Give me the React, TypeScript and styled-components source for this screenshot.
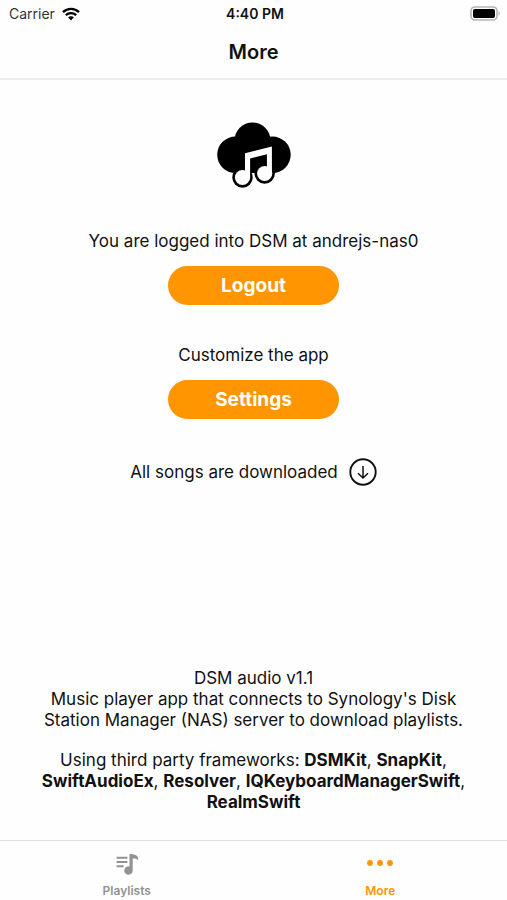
import React from "react";
import styled, { createGlobalStyle } from "styled-components";

const GlobalStyle = createGlobalStyle`
  *, *::before, *::after { box-sizing: border-box; }
  body {
    margin: 0;
    background: #fefefe;
    color: #111;
    font-family: Inter, "Liberation Sans", sans-serif;
    font-size: 17px;
    line-height: 21px;
  }
`;

const Screen = styled.div`
  display: flex;
  flex-direction: column;
  min-height: 100vh;
`;

const Header = styled.header`
  border-bottom: 2px solid #efefef;
`;

const StatusBar = styled.div`
  display: grid;
  grid-template-columns: 1fr auto 1fr;
  align-items: center;
  height: 27px;
  padding: 0 6px 0 9px;
  font-size: 14px;
  line-height: 20px;
`;

const Carrier = styled.span`
  display: flex;
  align-items: center;
  gap: 7px;
  color: #333;
`;

const Clock = styled.time`
  font-weight: 600;
`;

const Battery = styled.span`
  display: flex;
  justify-content: flex-end;
`;

const Title = styled.h1`
  margin: 0;
  padding: 13px 0;
  font-size: 20px;
  font-weight: 600;
  line-height: 25px;
  text-align: center;
`;

const Content = styled.main`
  flex: 1;
  display: flex;
  flex-direction: column;
  align-items: center;
  padding: 42px 32px 27px;
  text-align: center;
`;

const Sections = styled.div`
  display: flex;
  flex-direction: column;
  align-items: center;
  gap: 40px;
  margin: 41px 0 39px;
`;

const Section = styled.section`
  display: flex;
  flex-direction: column;
  align-items: center;
  gap: 14px;
`;

const Logo = styled.svg`
  display: block;
`;

const Text = styled.p`
  margin: 0;
`;

const PillButton = styled.button`
  width: 171px;
  height: 39px;
  border: 0;
  border-radius: 20px;
  background: #ff9500;
  color: #fff;
  font: inherit;
  font-size: 19px;
  font-weight: 700;
  cursor: pointer;
`;

const DownloadStatus = styled.div`
  display: flex;
  align-items: center;
  gap: 11px;
`;

const About = styled.footer`
  display: flex;
  flex-direction: column;
  gap: 19px;
  max-width: 440px;
  margin-top: auto;
`;

const TabBar = styled.nav`
  display: grid;
  grid-template-columns: 1fr 1fr;
  height: 60px;
  border-top: 1px solid #e0e0e0;
`;

const Tab = styled.a<{ $active?: boolean }>`
  display: flex;
  flex-direction: column;
  align-items: center;
  gap: 8px;
  padding-top: 10px;
  color: ${({ $active }) => ($active ? "#ff9500" : "#929292")};
  font-size: 12px;
  font-weight: 600;
  line-height: 16px;
  text-decoration: none;
`;

const WifiIcon = () => (
  <svg width="18" height="14" viewBox="0 0 18 14" fill="none" stroke="#000" aria-hidden="true">
    <path d="M1 5.2C5.5.7 12.5.7 17 5.2" strokeWidth="2.4" />
    <path d="M3.8 8.2c2.9-2.8 7.5-2.8 10.4 0" strokeWidth="2.3" />
    <path d="M9 9.2c-1.1 0-2.1.4-2.9 1.1L9 13.4l2.9-3.1C11.1 9.6 10.1 9.2 9 9.2Z" fill="#000" stroke="none" />
  </svg>
);

const BatteryIcon = () => (
  <svg width="31" height="15" viewBox="0 0 31 15" role="img" aria-label="Battery full">
    <rect x="1" y="1" width="26" height="13" rx="4" fill="#fff" stroke="#b5b5b5" strokeWidth="1.6" />
    <rect x="3" y="3" width="22" height="9" rx="2" fill="#000" />
    <path d="M28.5 5.2c1.9.8 1.9 3.8 0 4.6Z" fill="#b5b5b5" />
  </svg>
);

const CloudMusicLogo = () => (
  <Logo width="74" height="68" viewBox="0 0 74 68" role="img" aria-label="DSM audio">
    <circle cx="35.5" cy="18.5" r="18" />
    <circle cx="18.5" cy="32.8" r="18.3" />
    <circle cx="55.4" cy="32.8" r="18.3" />
    <rect x="18" y="28" width="38" height="23" />
    <circle cx="25.5" cy="55.5" r="10.2" />
    <circle cx="47.7" cy="51.5" r="10.2" />
    <g fill="#fff">
      <circle cx="25.5" cy="55.5" r="7.6" />
      <circle cx="47.7" cy="51.5" r="7.6" />
      <path d="M28 31.3 54.9 24.6V52H49.9V32.2L33.1 36.5V56H28Z" />
    </g>
  </Logo>
);

const DownloadIcon = () => (
  <svg width="28" height="28" viewBox="0 0 28 28" fill="none" stroke="#111" aria-hidden="true">
    <circle cx="14" cy="14" r="12.7" strokeWidth="1.9" />
    <path d="M14 8V20M9 15.2 14 20 19 15.2" strokeWidth="1.5" />
  </svg>
);

const PlaylistIcon = () => (
  <svg width="24" height="24" viewBox="0 0 24 24" fill="currentColor" aria-hidden="true">
    <path d="M1.600 5.800h10.800v2H1.600zM1.600 10h10.800v2H1.600zM1.600 14.300h7v2H1.600z" />
    <path d="M14.500 3c2.500 0 4.500.3 6.500 1.300 1.500.9 2.300 2.200 2.300 4.700-1.400-1.200-3-1.600-5.600-1.600v12.100a4.200 4.200 0 1 1-3.200-4Z" />
  </svg>
);

const MoreIcon = () => (
  <svg width="28" height="24" viewBox="0 0 28 24" fill="currentColor" aria-hidden="true">
    <circle cx="4" cy="12" r="2.9" />
    <circle cx="14" cy="12" r="2.9" />
    <circle cx="24" cy="12" r="2.9" />
  </svg>
);

const frameworks = ["DSMKit", "SnapKit", "SwiftAudioEx", "Resolver", "IQKeyboardManagerSwift", "RealmSwift"];

export default function App() {
  return (
    <Screen>
      <GlobalStyle />
      <Header>
        <StatusBar>
          <Carrier>
            Carrier
            <WifiIcon />
          </Carrier>
          <Clock dateTime="16:40">4:40 PM</Clock>
          <Battery>
            <BatteryIcon />
          </Battery>
        </StatusBar>
        <Title>More</Title>
      </Header>
      <Content>
        <CloudMusicLogo />
        <Sections>
          <Section>
            <Text>You are logged into DSM at andrejs-nas0</Text>
            <PillButton type="button">Logout</PillButton>
          </Section>
          <Section>
            <Text>Customize the app</Text>
            <PillButton type="button">Settings</PillButton>
          </Section>
        </Sections>
        <DownloadStatus>
          <Text>All songs are downloaded</Text>
          <DownloadIcon />
        </DownloadStatus>
        <About>
          <Text>
            DSM audio v1.1
            <br />
            Music player app that connects to Synology's Disk Station Manager (NAS) server to download playlists.
          </Text>
          <Text>
            Using third party frameworks:{" "}
            {frameworks.map((name, index) => (
              <React.Fragment key={name}>
                {index > 0 && ", "}
                <strong>{name}</strong>
              </React.Fragment>
            ))}
          </Text>
        </About>
      </Content>
      <TabBar>
        <Tab href="#playlists">
          <PlaylistIcon />
          Playlists
        </Tab>
        <Tab href="#more" $active aria-current="page">
          <MoreIcon />
          More
        </Tab>
      </TabBar>
    </Screen>
  );
}
